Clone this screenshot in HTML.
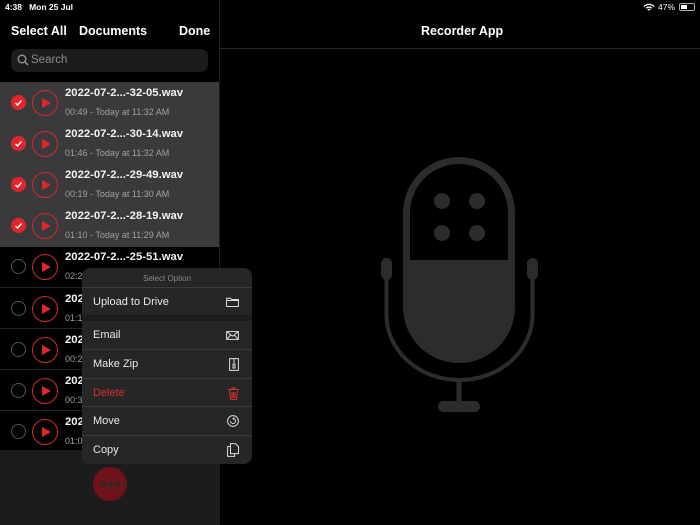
<!DOCTYPE html>
<html><head><style>
*{margin:0;padding:0;box-sizing:border-box}
body{width:700px;height:525px;background:#000;font-family:"Liberation Sans",sans-serif;color:#fff;position:relative;overflow:hidden}
.a{position:absolute}
.row{position:absolute;left:0;width:219px;height:41px}
.chk{position:absolute;left:11px;top:13px;width:15px;height:15px;border-radius:50%}
.play{position:absolute;left:32px;top:8px;width:26px;height:26px;border-radius:50%;border:1.3px solid #d7262b}
.play:after{content:"";position:absolute;left:9px;top:6.5px;border-left:9px solid #e0262c;border-top:5.5px solid transparent;border-bottom:5.5px solid transparent}
.t{position:absolute;left:65px;top:5px;font-size:11.3px;font-weight:bold;color:#f2f2f2;white-space:nowrap}
.s{position:absolute;left:65px;top:25px;font-size:9px;color:#a0a0a0;white-space:nowrap}
.opt{position:absolute;left:0;width:170px;font-size:11px;color:#e8e8e8;padding-left:11px;border-top:1px solid #3a3a3a}
.ic{position:absolute;right:13px}
</style></head><body>
<div class="a" style="left:5px;top:2px;font-size:8.5px;font-weight:bold">4:38 &nbsp; Mon 25 Jul</div>
<div class="a" style="left:645px;top:2px;font-size:8.5px">
<svg width="12" height="9" viewBox="0 0 12 9" style="position:absolute;left:-2px;top:1px"><path d="M1 3.5A7 7 0 0 1 11 3.5M3 5.3A4.3 4.3 0 0 1 9 5.3M4.8 7A1.8 1.8 0 0 1 7.2 7" stroke="#fff" stroke-width="1.3" fill="none"/></svg>
<span style="position:absolute;left:13px;top:0">47%</span>
<div style="position:absolute;left:34px;top:1px;width:16px;height:8px;border:1px solid #aaa;border-radius:2px"><div style="width:6px;height:4px;margin:1px;background:#fff"></div></div></div>
<div class="a" style="left:219px;top:0;width:1px;height:525px;background:#1e1e1e"></div>
<div class="a" style="left:220px;top:48px;width:480px;height:1px;background:#262626"></div>
<div class="a" style="left:11px;top:24px;font-size:12.5px;font-weight:bold">Select All</div>
<div class="a" style="left:79px;top:24px;font-size:12.5px;font-weight:bold">Documents</div>
<div class="a" style="left:179px;top:24px;font-size:12.5px;font-weight:bold">Done</div>
<div class="a" style="left:421px;top:24px;font-size:12.5px;font-weight:bold">Recorder App</div>
<div class="a" style="left:11px;top:49px;width:197px;height:23px;background:#1c1c1e;border-radius:7px">
<svg width="12" height="12" viewBox="0 0 12 12" style="position:absolute;left:6px;top:5px"><circle cx="5" cy="5" r="3.8" stroke="#999" stroke-width="1.3" fill="none"/><path d="M8 8L11 11" stroke="#999" stroke-width="1.4"/></svg>
<span style="position:absolute;left:20px;top:5px;font-size:11.5px;color:#8a8a8a">Search</span></div>
<div class="a" style="left:0;top:82px;width:219px;height:165px;background:#3a3a3c"></div>
<div class="a" style="left:0;top:450px;width:219px;height:75px;background:#1c1c1e"></div>

<div class="row" style="top:82px"><div class="chk" style="background:#e0262c"></div><div class="play"></div><div class="t">2022-07-2...-32-05.wav</div><div class="s">00:49 - Today at 11:32 AM</div></div>
<div class="row" style="top:123px"><div class="chk" style="background:#e0262c"></div><div class="play"></div><div class="t">2022-07-2...-30-14.wav</div><div class="s">01:46 - Today at 11:32 AM</div></div>
<div class="row" style="top:164px"><div class="chk" style="background:#e0262c"></div><div class="play"></div><div class="t">2022-07-2...-29-49.wav</div><div class="s">00:19 - Today at 11:30 AM</div></div>
<div class="row" style="top:205px"><div class="chk" style="background:#e0262c"></div><div class="play"></div><div class="t">2022-07-2...-28-19.wav</div><div class="s">01:10 - Today at 11:29 AM</div></div>
<div class="row" style="top:246px"><div class="chk" style="border:1px solid #555"></div><div class="play"></div><div class="t">2022-07-2...-25-51.wav</div><div class="s">02:2</div></div>
<div class="row" style="top:287px;border-top:1px solid #222"><div class="chk" style="border:1px solid #555"></div><div class="play"></div><div class="t">202</div><div class="s">01:1</div></div>
<div class="row" style="top:328px;border-top:1px solid #222"><div class="chk" style="border:1px solid #555"></div><div class="play"></div><div class="t">202</div><div class="s">00:2</div></div>
<div class="row" style="top:369px;border-top:1px solid #222"><div class="chk" style="border:1px solid #555"></div><div class="play"></div><div class="t">202</div><div class="s">00:3</div></div>
<div class="row" style="top:410px;border-top:1px solid #222"><div class="chk" style="border:1px solid #555"></div><div class="play"></div><div class="t">202</div><div class="s">01:0</div></div>
<svg class="a" style="left:11px;top:95px" width="15" height="140"><g stroke="#fff" stroke-width="1.4" fill="none"><path d="M4.5 8L6.5 10L10.5 5.5"/><path d="M4.5 49L6.5 51L10.5 46.5"/><path d="M4.5 90L6.5 92L10.5 87.5"/><path d="M4.5 131L6.5 133L10.5 128.5"/></g></svg>

<div class="a" style="left:93px;top:467px;width:34px;height:34px;border-radius:50%;background:#6e1418">
<div style="position:absolute;left:8px;top:14.5px;width:5px;height:5px;border-radius:50%;background:#2a2a2a;box-shadow:7px 0 #2a2a2a,14px 0 #2a2a2a"></div></div>

<div class="a" style="left:82px;top:268px;width:170px;height:196px;background:#262626;border-radius:8px;overflow:hidden">
<div style="position:absolute;top:6px;width:170px;text-align:center;font-size:8px;color:#8a8a8a">Select Option</div>
<div class="opt" style="top:19px;height:28px;line-height:28px">Upload to Drive<svg class="ic" style="top:9px" width="13" height="10"><path d="M0.6 1.2h4l1 1.3h6.8v7h-11.8z M0.6 3.5h11.8" stroke="#ddd" stroke-width="1" fill="none"/></svg></div>
<div style="position:absolute;top:47px;width:170px;height:6px;background:#1c1c1c"></div>
<div class="opt" style="top:53px;height:28px;line-height:28px;border-top:0">Email<svg class="ic" style="top:10px" width="13" height="9"><path d="M0.6 0.6h11.8v7.8H0.6z M0.6 0.6l5.9 4.5 5.9-4.5 M0.6 8.4l4.3-4.5 M12.4 8.4l-4.3-4.5" stroke="#ddd" stroke-width="1" fill="none"/></svg></div>
<div class="opt" style="top:81px;height:29px;line-height:29px">Make Zip<svg class="ic" style="top:8px" width="10" height="13"><path d="M0.6 0.6h8.8v11.8H0.6z M5 1v4 M4 6h2v4h-2z" stroke="#ddd" stroke-width="1" fill="none"/></svg></div>
<div class="opt" style="top:110px;height:28px;line-height:28px;color:#d6302c">Delete<svg class="ic" style="top:8px" width="11" height="13"><path d="M0 2.5h11 M4 2.5V1h3v1.5 M1.5 2.5l1 10h6l1-10 M4 5v6 M5.5 5v6 M7 5v6" stroke="#d6302c" stroke-width="1" fill="none"/></svg></div>
<div class="opt" style="top:138px;height:29px;line-height:29px">Move<svg class="ic" style="top:8px" width="12" height="12"><circle cx="6" cy="6" r="5.4" stroke="#ddd" fill="none"/><path d="M3.5 6a2.5 2.5 0 1 0 2.5-2.5 M7 2.5l-1 1 1 1" stroke="#ddd" fill="none"/></svg></div>
<div class="opt" style="top:167px;height:29px;line-height:29px">Copy<svg class="ic" style="top:7px" width="12" height="14"><path d="M3.5 0.6h5l3 3v7h-8z M0.6 3.5h3 M0.6 3.5v9.9h7v-3" stroke="#ddd" fill="none"/></svg></div>
</div>

<svg class="a" style="left:370px;top:150px" width="180" height="270" viewBox="0 0 180 270">
<g fill="#2c2c2e" stroke="#2c2c2e">
<path d="M89 10.5a52.5 52.5 0 0 1 52.5 52.5v94a52.5 52.5 0 0 1-105 0v-94a52.5 52.5 0 0 1 52.5-52.5z" fill="none" stroke-width="7"/>
<path d="M36.5 110h105v47a52.5 52.5 0 0 1-105 0z" stroke="none"/>
<circle cx="72" cy="51" r="8" stroke="none"/><circle cx="107" cy="51" r="8" stroke="none"/>
<circle cx="72" cy="83" r="8" stroke="none"/><circle cx="107" cy="83" r="8" stroke="none"/>
<rect x="11" y="108" width="11" height="22" rx="5.5" stroke="none"/>
<rect x="157" y="108" width="11" height="22" rx="5.5" stroke="none"/>
<path d="M16.5 128v37a73 65 0 0 0 146 0v-37" fill="none" stroke-width="4"/>
<path d="M89 230v24" stroke-width="5"/>
<rect x="68" y="251" width="42" height="11" rx="5.5" stroke="none"/>
</g></svg>
</body></html>
